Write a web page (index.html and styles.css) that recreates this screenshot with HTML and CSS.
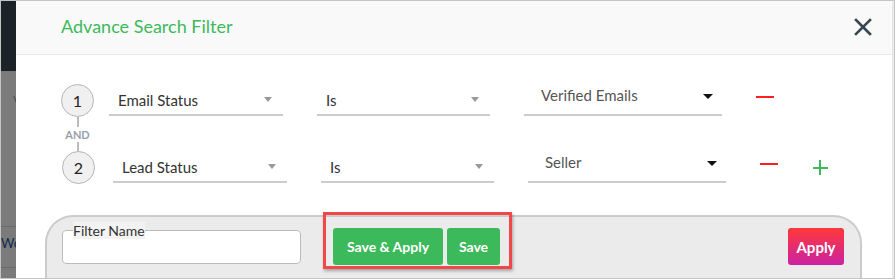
FILE: index.html
```html
<!DOCTYPE html>
<html lang="en">
<head>
    <meta charset="UTF-8">
    <meta name="viewport" content="width=device-width, initial-scale=1.0">
    <title>Advance Search Filter</title>
    <link rel="stylesheet" href="styles.css">
</head>
<body>

    <div class="screen">
        <!-- page behind the modal -->
        <div class="backdrop">
            <div class="backdrop-top"></div>
            <div class="backdrop-body">
                <span class="backdrop-mark">\</span>
                <span class="backdrop-text">Wo</span>
            </div>
        </div>

        <div class="modal">
            <div class="modal-header">
                <h2 class="modal-title">Advance Search Filter</h2>
                <button class="close-btn" aria-label="Close">
                    <svg width="18" height="18" viewBox="0 0 18 18">
                        <path d="M2 2 L16 16 M16 2 L2 16" stroke="#37474f" stroke-width="2.6" stroke-linecap="square" fill="none"/>
                    </svg>
                </button>
            </div>

            <div class="modal-body">
                <div class="rule">
                    <div class="step">1</div>
                    <div class="fields">
                        <div class="select field-wide"><span>Email Status</span><i class="caret"></i></div>
                        <div class="select field-op"><span>Is</span><i class="caret"></i></div>
                        <div class="select field-value"><span>Verified Emails</span><i class="caret caret-dark"></i></div>
                        <button class="icon-btn minus" aria-label="Remove"></button>
                    </div>
                </div>

                <div class="joiner">
                    <span class="joiner-line"></span>
                    <span class="joiner-label">AND</span>
                    <span class="joiner-line"></span>
                </div>

                <div class="rule rule-second">
                    <div class="step">2</div>
                    <div class="fields">
                        <div class="select field-wide"><span>Lead Status</span><i class="caret"></i></div>
                        <div class="select field-op"><span>Is</span><i class="caret"></i></div>
                        <div class="select field-value"><span>Seller</span><i class="caret caret-dark"></i></div>
                        <button class="icon-btn minus" aria-label="Remove"></button>
                        <button class="icon-btn plus" aria-label="Add"></button>
                    </div>
                </div>
            </div>

            <div class="modal-footer">
                <fieldset class="filter-name">
                    <legend>Filter Name</legend>
                    <input type="text">
                </fieldset>
                <div class="save-group">
                    <button class="btn btn-green btn-save-apply">Save &amp; Apply</button>
                    <button class="btn btn-green btn-save">Save</button>
                </div>
                <button class="btn btn-apply">Apply</button>
                <div class="highlight"></div>
            </div>
        </div>
    </div>

</body>
</html>
```

FILE: styles.css
```css
/* Base */
body {
    margin: 0;
    font-family: Lato, "Open Sans", Arial, sans-serif;
    color: #333;
    background: #fff;
}

.screen {
    width: 895px;
    height: 279px;
    box-sizing: border-box;
    border: 1px solid #c4c4c4;
    display: flex;
    overflow: hidden;
}

/* Page behind the modal */
.backdrop {
    width: 15px;
    display: flex;
    flex-direction: column;
    flex-shrink: 0;
}

.backdrop-top {
    height: 70px;
    flex-shrink: 0;
    background: #1c2328;
}

.backdrop-body {
    flex: 1;
    background: #7b7b7b;
    display: flex;
    flex-direction: column;
    border-top: 1px solid #777;
}

.backdrop-mark {
    color: #333;
    font-size: 10px;
    margin: 22px 0 0 12px;
    line-height: 10px;
}

.backdrop-text {
    margin-top: 122px;
    border-top: 1px solid #6a6a6a;
    border-bottom: 1px solid #6a6a6a;
    padding: 9px 0 17px;
    font-size: 13px;
    color: #0d2a4a;
    line-height: 14px;
    white-space: nowrap;
    overflow: hidden;
}

/* Modal */
.modal {
    flex: 1;
    display: flex;
    flex-direction: column;
    background: #fff;
    margin-right: 2px;
    box-shadow: 2px 0 3px rgba(0,0,0,0.12);
}

.modal > * {
    flex-shrink: 0;
}

.modal-header {
    height: 53px;
    background: #f9f9f9;
    border-bottom: 1px solid #e8e8e8;
    display: flex;
    align-items: center;
    justify-content: space-between;
    padding: 0 20px 0 45px;
}

.modal-title {
    margin: 0;
    font-size: 18px;
    font-weight: normal;
    color: #3cb95b;
    padding-bottom: 3px;
}

.close-btn {
    background: none;
    border: none;
    padding: 0;
    width: 18px;
    height: 18px;
    margin-bottom: 2px;
}

/* Rules */
.modal-body {
    padding: 29px 0 0 45px;
    height: 130px;
    box-sizing: border-box;
}

.rule {
    display: flex;
    align-items: center;
    gap: 15px;
}

.rule-second {
    padding-left: 1px;
}

.rule-second .fields {
    margin-left: 3px;
}

.step {
    width: 31px;
    height: 31px;
    border: 1px solid #b5b5b5;
    border-radius: 50%;
    background: #f0f0f0;
    display: flex;
    align-items: center;
    justify-content: center;
    font-size: 16px;
    color: #222;
    flex-shrink: 0;
}

.fields {
    display: flex;
    align-items: center;
    gap: 34px;
}

.select {
    height: 29px;
    border-bottom: 2px solid #cccccc;
    display: flex;
    align-items: center;
    justify-content: space-between;
    padding: 0 11px 0 9px;
    box-sizing: content-box;
    font-size: 15px;
    color: #333;
}

.field-wide {
    width: 154px;
}

.field-op {
    width: 153px;
}

.field-value {
    width: 172px;
    padding: 0 9px 0 17px;
    align-items: flex-start;
    color: #555;
}

.field-value span {
    margin-top: 1px;
}

.field-value .caret {
    margin-top: 9px;
}

.caret {
    width: 0;
    height: 0;
    border-left: 4px solid transparent;
    border-right: 4px solid transparent;
    border-top: 5px solid #999;
}

.caret-dark {
    border-left-width: 5px;
    border-right-width: 5px;
    border-top: 5px solid #111;
}

.icon-btn {
    width: 18px;
    height: 18px;
    border: none;
    padding: 0;
    background: none;
    position: relative;
}

.minus {
    margin-top: -8px;
}

.minus::before {
    content: "";
    position: absolute;
    left: 0;
    right: 0;
    top: 8px;
    height: 2px;
    background: #ff1f1f;
}

.plus::before,
.plus::after {
    content: "";
    position: absolute;
    background: #3cb95b;
}

.plus::before {
    left: 1px;
    right: 2px;
    top: 8px;
    height: 2px;
}

.plus::after {
    top: 1px;
    bottom: 2px;
    left: 7px;
    width: 2px;
}

/* AND connector */
.joiner {
    width: 33px;
    height: 34px;
    display: flex;
    flex-direction: column;
    align-items: center;
}

.joiner-line {
    width: 2px;
    flex: 1;
    background: #bcbcbc;
}

.joiner-label {
    font-size: 11px;
    font-weight: bold;
    color: #9aa0a8;
    line-height: 13px;
    padding: 1px 0;
}

/* Footer */
.modal-footer {
    position: relative;
    margin: 30px 30px 0 29px;
    height: 80px;
    background: #ebebeb;
    border: 2px solid #cbcbcb;
    border-bottom: none;
    border-radius: 28px 28px 0 0;
    display: flex;
    align-items: flex-start;
    padding: 5px 16px 0 15px;
}

.filter-name {
    margin: 0;
    padding: 0;
    width: 239px;
    height: 42px;
    box-sizing: border-box;
    border: 1px solid #bbbbbb;
    border-radius: 4px;
    background: #fff;
}

.filter-name legend {
    margin-left: 10px;
    padding: 0;
    font-size: 14px;
    line-height: 17px;
    color: #333;
    background: #f3f3f3;
}

.filter-name input {
    border: none;
    outline: none;
    width: 100%;
    height: 22px;
    box-sizing: border-box;
    background: transparent;
}

.save-group {
    display: flex;
    gap: 4px;
    margin: 6px 0 0 32px;
}

.btn {
    height: 37px;
    border: none;
    border-radius: 3px;
    color: #fff;
    font-family: Lato, "Open Sans", Arial, sans-serif;
    font-size: 14px;
    font-weight: bold;
    padding: 0;
}

.btn-green {
    background: #3cb95b;
}

.btn-save-apply {
    width: 110px;
}

.btn-save {
    width: 53px;
}

.btn-apply {
    margin: 6px 0 0 auto;
    width: 56px;
    font-size: 15px;
    background: linear-gradient(180deg, #ff3838 0%, #cb22a3 100%);
}

/* Annotation box around the save buttons */
.highlight {
    position: absolute;
    left: 276px;
    top: -5px;
    width: 183px;
    height: 51px;
    border: 3px solid #f0474a;
    box-shadow: 1px 2px 3px rgba(0,0,0,0.3);
}
```
